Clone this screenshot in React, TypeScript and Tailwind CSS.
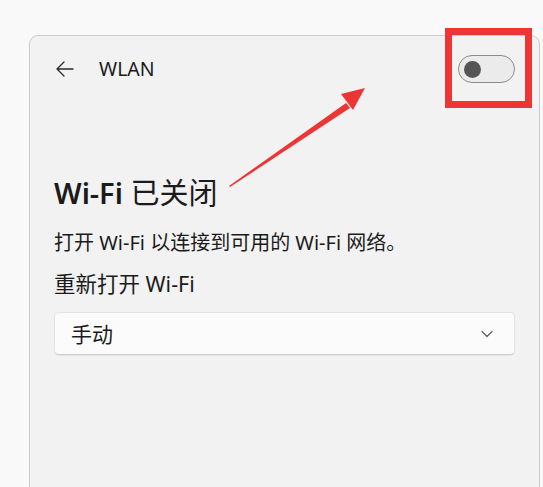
import React from 'react';

const FONT = '"Segoe UI", "Noto Sans", "Noto Sans CJK SC", sans-serif';

function BackArrow() {
  return (
    <svg width="20" height="20" viewBox="0 0 20 20" fill="none" stroke="#2a2a2a" strokeWidth="1.3" strokeLinecap="round" strokeLinejoin="round">
      <path d="M18 10H2M9 3L2 10l7 7" />
    </svg>
  );
}

function Toggle() {
  return (
    <div className="flex h-[28px] w-[57px] items-center rounded-full border-[1.5px] border-[#8b8b8b] bg-[#ebebeb] pl-[5px]">
      <div className="h-[17px] w-[17px] rounded-full bg-[#555555]" />
    </div>
  );
}

function Chevron() {
  return (
    <svg width="12" height="8" viewBox="0 0 12 8" fill="none" stroke="#5c5c5c" strokeWidth="1.2" strokeLinecap="round" strokeLinejoin="round">
      <path d="M1 1.5l5 5 5-5" />
    </svg>
  );
}

export default function App() {
  return (
    <div
      className="relative h-[487px] w-[543px] overflow-hidden bg-[#f9f9f9] text-[#1b1b1b]"
      style={{ fontFamily: FONT }}
    >
      <div className="ml-[29px] mt-[35px] h-[460px] w-[511px] rounded-t-[9px] border-[1.5px] border-[#cbcbcb] bg-[#f2f2f2] px-[24px] pt-[19px]">
        {/* header */}
        <div className="flex h-[28px] items-center justify-between">
          <div className="flex items-center">
            <div className="ml-[1px] flex h-[20px] w-[20px] items-center justify-center">
              <BackArrow />
            </div>
            <span className="ml-[24px] text-[19.5px] leading-[26px]">WLAN</span>
          </div>
          <Toggle />
        </div>

        <div className="mt-[91px] text-[29px] leading-[37px]">
          <span className="font-semibold">Wi-Fi</span> <span className="font-normal">已关闭</span>
        </div>

        <p className="mt-[18px] text-[20px] leading-[27px]">打开 Wi-Fi 以连接到可用的 Wi-Fi 网络。</p>

        <p className="mt-[14px] text-[21.5px] leading-[28px]">重新打开 Wi-Fi</p>

        <div className="mt-[14px] flex h-[43px] items-center justify-between rounded-[5px] border border-[#e3e3e3] border-b-[#cfcfcf] bg-[#fbfbfb] pl-[16px] pr-[21px] shadow-[0_1px_1px_rgba(0,0,0,0.06)]">
          <span className="text-[21px] leading-[28px]">手动</span>
          <Chevron />
        </div>
      </div>

      {/* annotation: red box around the toggle */}
      <div className="absolute left-[445px] top-[28px] h-[80px] w-[87px] border-[7px] border-[#ee3535]" />

      {/* annotation: arrow */}
      <svg className="absolute left-0 top-0" width="543" height="487" viewBox="0 0 543 487">
        <path d="M229 186 L346 103 L350 108 L230 187 Z" fill="#ee3535" />
        <path d="M365 88 L341 94 L353 110 Z" fill="#ee3535" />
      </svg>
    </div>
  );
}
